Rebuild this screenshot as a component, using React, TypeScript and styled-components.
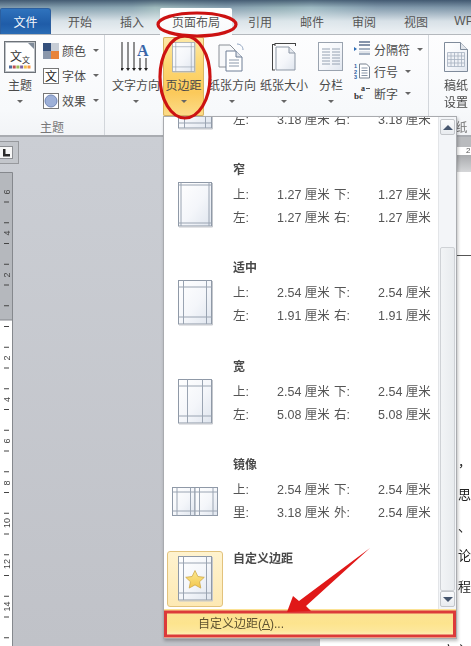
import React from 'react';
import styled, {createGlobalStyle} from 'styled-components';

const GlobalStyle = createGlobalStyle`
  html, body {
    margin: 0;
    padding: 0;
    background: #fff;
  }
  * {
    box-sizing: border-box;
  }
`;

const Window = styled.div`
  position: relative;
  width: 471px;
  height: 646px;
  overflow: hidden;
  display: flex;
  flex-direction: column;
  font-family: 'Liberation Sans', 'Noto Sans CJK SC', sans-serif;
  font-size: 12px;
  color: #4a4a4a;
  filter: blur(0.35px);
`;

/* ---------- tabs ---------- */
const TabBar = styled.div`
  height: 35px;
  flex: none;
  display: flex;
  align-items: flex-end;
  background:
    linear-gradient(180deg, rgba(62, 84, 108, 0.88) 0, rgba(150, 170, 185, 0.6) 22%, rgba(226, 233, 238, 0.92) 62%, #eef2f5 100%),
    linear-gradient(90deg, #5d7f96 0, #7aa0a8 28%, #a9d0c0 33%, #6d8ea2 48%, #8fb8b4 60%, #a8cfd0 66%, #66859c 80%, #58758e 100%);
  border-bottom: 1px solid #b4b8bd;
`;

const FileTab = styled.div`
  width: 51px;
  height: 26px;
  flex: none;
  margin-right: 3px;
  display: flex;
  align-items: center;
  justify-content: center;
  color: #f4f8fc;
  font-size: 12px;
  border-radius: 2px 3px 0 0;
  background: linear-gradient(180deg, #2f73bd, #1f5ca8 60%, #2a6cb5);
  border: 1px solid #2c5f9f;
  border-bottom: none;
`;

const Tab = styled.div<{active?: boolean}>`
  width: ${props => (props.active ? '72px' : '52px')};
  height: 26px;
  flex: none;
  display: flex;
  align-items: center;
  justify-content: center;
  color: #555;
  ${props =>
    props.active &&
    `
    margin: 0 2px;
    height: 27px;
    margin-bottom: -1px;
    background: linear-gradient(180deg, #fff, #f8fafb);
    border-radius: 2px 2px 0 0;
  `}
`;

/* ---------- ribbon ---------- */
const Ribbon = styled.div`
  height: 102px;
  flex: none;
  display: flex;
  background: linear-gradient(180deg, #fdfdfe, #f7f9fb 75%, #f2f4f7);
  border-bottom: 2px solid #a9acb1;
`;

const Group = styled.div<{width: number}>`
  width: ${props => props.width}px;
  flex: none;
  display: flex;
  flex-direction: column;
  border-right: 1px solid #d2d6db;
`;

const GroupBody = styled.div<{inset?: number}>`
  height: 81px;
  margin-top: 2px;
  padding-left: ${props => props.inset || 0}px;
  display: flex;
  gap: 3px;
`;

const GroupLabel = styled.div`
  flex: 1;
  display: flex;
  align-items: center;
  justify-content: center;
  color: #777;
`;

const BigButton = styled.div<{width: number; hot?: boolean}>`
  width: ${props => props.width}px;
  height: 79px;
  flex: none;
  padding-top: 5px;
  display: flex;
  flex-direction: column;
  align-items: center;
  white-space: nowrap;
  border-radius: 2px;
  ${props =>
    props.hot &&
    `
    background: linear-gradient(180deg, #fde9a8 0, #fdd872 35%, #fbc95a 70%, #fcdc8a 100%);
    box-shadow: inset 0 0 0 1px #d8b562;
  `}
`;

const IconSlot = styled.div`
  height: 30px;
  display: flex;
  align-items: center;
  justify-content: center;
`;

const BigLabel = styled.div`
  margin-top: 6px;
  height: 16px;
  line-height: 16px;
`;

const Caret = styled.span`
  display: inline-block;
  width: 0;
  height: 0;
  border-left: 3px solid transparent;
  border-right: 3px solid transparent;
  border-top: 3px solid #666;
`;

const BigCaret = styled(Caret)`
  margin-top: 6px;
`;

const SmallColumn = styled.div<{row: number; width: number}>`
  width: ${props => props.width}px;
  flex: none;
  padding-top: 1px;
  display: grid;
  grid-auto-rows: ${props => props.row}px;
`;

const SmallRow = styled.div`
  display: flex;
  align-items: center;
  gap: 3px;
  white-space: nowrap;
`;

const SmallCaret = styled(Caret)`
  margin-left: 4px;
`;

const PaperLine = styled.div`
  height: 18px;
  line-height: 18px;
`;

/* ---------- work area ---------- */
const Workspace = styled.div`
  flex: 1;
  display: flex;
  min-height: 0;
`;

const Gutter = styled.div`
  width: 320px;
  flex: none;
  padding-top: 4px;
  background: linear-gradient(180deg, #cbced4, #c0c2c8);
`;

const RulerCorner = styled.div`
  width: 19px;
  height: 23px;
  padding: 4px 5px 4px 0;
  border: 1px solid #97999d;
  border-left: none;
  background: #c3c6cb;
`;

const CornerBox = styled.div`
  width: 13px;
  height: 13px;
  display: flex;
  align-items: center;
  justify-content: center;
  background: #f7f7f7;
  border: 1px solid #8d8f93;
  border-left: none;
`;

const VerticalRuler = styled.div`
  margin-top: 8px;
  width: 13px;
  height: 474px;
`;

const Page = styled.div`
  flex: 1;
  min-width: 0;
  display: flex;
  flex-direction: column;
  background: #fff;
`;

const PageRulerTop = styled.div`
  height: 10px;
  flex: none;
  background: #b9bbbe;
`;

const PageRuler = styled.div`
  height: 8px;
  flex: none;
  padding-left: 146px;
  background: #fff;
  color: #555;
  font-size: 8px;
  line-height: 8px;
`;

const PageRulerBottom = styled.div`
  height: 17px;
  flex: none;
  background: linear-gradient(180deg, #a9abae, #d5d6d8);
`;

const PageText = styled.div`
  padding-left: 138px;
  color: #222;
  font-size: 13px;
`;

const TableRule = styled.div`
  margin-top: 83px;
  flex: none;
  border-top: 1px solid #555;
`;

const TextLine = styled.div<{gap: number}>`
  margin-top: ${props => props.gap}px;
  height: 20px;
  line-height: 20px;
  white-space: nowrap;
`;

const LastLine = styled(TextLine)`
  margin-left: -16px;
`;

/* ---------- margins dropdown ---------- */
const Dropdown = styled.div`
  position: absolute;
  left: 163px;
  top: 116px;
  width: 294px;
  height: 523px;
  display: flex;
  flex-direction: column;
  background: #fff;
  border: 1px solid #a9abaf;
  box-shadow: 1px 2px 3px rgba(0, 0, 0, 0.25);
`;

const GalleryArea = styled.div`
  height: 492px;
  flex: none;
  display: flex;
`;

const Gallery = styled.div`
  flex: 1;
  min-width: 0;
  display: flex;
  flex-direction: column;
  justify-content: flex-end;
  overflow: hidden;
`;

const MarginItem = styled.div<{custom?: boolean}>`
  height: ${props => (props.custom ? '58px' : '98.25px')};
  flex: none;
  padding-top: ${props => (props.custom ? '0' : '4px')};
  display: flex;
`;

const Thumb = styled.div<{custom?: boolean}>`
  width: 61px;
  flex: none;
  margin-right: 8px;
  display: flex;
  justify-content: center;
  padding-top: 20px;
  ${props =>
    props.custom &&
    `
    width: 56px;
    height: 56px;
    margin: 0 10px 0 3px;
    padding-top: 4px;
    background: linear-gradient(180deg, #fff3cf, #fde9b4);
    border: 1px solid #e2c27c;
    border-radius: 3px;
  `}
`;

const MirrorThumb = styled(Thumb)`
  padding-top: 30px;
`;

const Details = styled.div`
  flex: 1;
`;

const ItemTitle = styled.div`
  height: 16px;
  line-height: 16px;
  font-weight: bold;
  color: #4a4a4a;
`;

const ValueGrid = styled.div`
  margin-top: 4px;
  display: grid;
  grid-template-columns: 44px 57px 44px auto;
  grid-auto-rows: 23px;
  align-items: center;
  white-space: nowrap;
  color: #555;
  font-size: 12.5px;
`;

const ScrollBar = styled.div`
  width: 18px;
  flex: none;
  display: flex;
  flex-direction: column;
  align-items: center;
  padding-top: 2px;
  background: #f3f5f8;
  border-left: 1px solid #e3e5e8;
`;

const ScrollButton = styled.div`
  width: 15px;
  height: 16px;
  flex: none;
  display: flex;
  align-items: center;
  justify-content: center;
  background: linear-gradient(180deg, #fbfcfd, #e8ebef);
  border: 1px solid #c3c6ca;
  border-radius: 2px;
`;

const ScrollTrack = styled.div`
  height: 112px;
  flex: none;
`;

const ScrollThumb = styled.div`
  width: 15px;
  height: 344px;
  flex: none;
  background: linear-gradient(90deg, #f2f4f6, #e8ebee);
  border: 1px solid #cfd2d6;
  border-radius: 2px;
`;

const ArrowUp = styled.span`
  width: 0;
  height: 0;
  border-left: 5px solid transparent;
  border-right: 5px solid transparent;
  border-bottom: 5px solid #46566e;
`;

const ArrowDown = styled.span`
  width: 0;
  height: 0;
  border-left: 5px solid transparent;
  border-right: 5px solid transparent;
  border-top: 5px solid #46566e;
`;

const Footer = styled.div`
  flex: 1;
  display: flex;
  align-items: center;
  padding: 0 0 3px 34px;
  color: #5f5230;
  background: linear-gradient(180deg, #fbe295 0, #fde48e 50%, #fde79c 75%, #fff5cb 100%);
`;

const Annotations = styled.svg`
  position: absolute;
  left: 0;
  top: 0;
  pointer-events: none;
`;

/* ---------- drawings ---------- */
const PageDefs = () => (
  <svg width="0" height="0" style={{position: 'absolute'}}>
    <defs>
      <linearGradient id="sheet" x1="0" y1="0" x2="1" y2="1">
        <stop offset="0" stopColor="#ffffff" />
        <stop offset="0.55" stopColor="#f4f6fa" />
        <stop offset="1" stopColor="#dfe5ee" />
      </linearGradient>
      <linearGradient id="star" x1="0" y1="0" x2="0" y2="1">
        <stop offset="0" stopColor="#fbe98f" />
        <stop offset="1" stopColor="#f3c64e" />
      </linearGradient>
    </defs>
  </svg>
);

const MarginSheet = ({
  inset,
  star,
  width = 36,
  height = 46,
}: {
  inset: [number, number];
  star?: boolean;
  width?: number;
  height?: number;
}) => (
  <svg width={width} height={height} viewBox="0 0 36 46" style={{display: 'block', flex: 'none'}}>
    <rect x="1.5" y="0.5" width="33" height="43.5" fill="url(#sheet)" stroke="#8f99a7" />
    <path
      d={`M1.5 ${inset[0]}H34.5M1.5 ${44 - inset[0]}H34.5M${inset[1] + 1.5} .5V44M${34.5 - inset[1]} .5V44`}
      stroke="#9aa4b2"
      fill="none"
    />
    <path d="M2 45H35.5V1" stroke="#c5c8cd" fill="none" />
    {star && (
      <path
        d="M18 14.5l2.9 6 6.4.8-4.7 4.4 1.2 6.4-5.8-3.2-5.8 3.2 1.2-6.4-4.7-4.4 6.4-.8z"
        fill="url(#star)"
        stroke="#c9a13c"
        strokeWidth=".7"
      />
    )}
  </svg>
);

const MirrorSheet = () => (
  <svg width="46" height="30" viewBox="0 0 46 30" style={{display: 'block', flex: 'none'}}>
    <rect x=".5" y=".5" width="22.5" height="28" fill="url(#sheet)" stroke="#8f99a7" />
    <rect x="23" y=".5" width="22.5" height="28" fill="url(#sheet)" stroke="#8f99a7" />
    <path d="M.5 5H45.5M.5 24H45.5M5 .5V28.5M41 .5V28.5M18.5 .5V28.5M27.5 .5V28.5" stroke="#9aa4b2" fill="none" />
  </svg>
);

const ThemeIcon = () => (
  <svg width="32" height="32" viewBox="0 0 32 32">
    <rect x=".5" y=".5" width="31" height="31" fill="#fff" stroke="#6d7278" />
    <rect x="1.5" y="1.5" width="29" height="29" fill="none" stroke="#bfc3c8" />
    <path d="M24 2h6v6z" fill="#7f8a99" />
    <text x="6" y="20" fontSize="12" fill="#333" fontFamily="Noto Sans CJK SC">文</text>
    <text x="18" y="22" fontSize="8" fill="#333" fontFamily="Noto Sans CJK SC">文</text>
    {['#4f6d9b', '#c0504d', '#9bbb59', '#8064a2', '#f2c14e', '#f79646'].map((c, i) => (
      <rect key={c} x={5 + i * 3.7} y="24.5" width="3" height="3" fill={c} />
    ))}
  </svg>
);

const ColorIcon = () => (
  <svg width="16" height="16" viewBox="0 0 16 16">
    <rect x="0" y="0" width="8" height="8" fill="#34507c" />
    <rect x="8" y="0" width="8" height="8" fill="#c7cdd6" />
    <rect x="0" y="8" width="8" height="8" fill="#8a97ab" />
    <rect x="8" y="8" width="8" height="8" fill="#e8843a" />
  </svg>
);

const FontIcon = () => (
  <svg width="16" height="16" viewBox="0 0 16 16">
    <rect x=".5" y=".5" width="15" height="15" fill="#fff" stroke="#777" />
    <text x="2" y="13" fontSize="12" fill="#222" fontFamily="Noto Sans CJK SC">文</text>
  </svg>
);

const EffectIcon = () => (
  <svg width="16" height="16" viewBox="0 0 16 16">
    <rect x=".5" y=".5" width="15" height="15" fill="#fff" stroke="#777" />
    <circle cx="8" cy="8" r="6" fill="#9db0d8" stroke="#7186b5" />
  </svg>
);

const TextDirectionIcon = () => (
  <svg width="30" height="30" viewBox="0 0 30 30">
    {[1, 7, 13, 19, 25].map((x, i) => (
      <g key={x} stroke="#222" fill="#222">
        <path d={`M${x} ${i < 3 ? 0 : 16}V27`} fill="none" />
        <path d={`M${x - 2} 26h4l-2 3z`} stroke="none" />
      </g>
    ))}
    <text x="16" y="14" fontSize="16" fontWeight="bold" fill="#3a66a8" fontFamily="Liberation Serif">A</text>
  </svg>
);

const PaperOrientationIcon = () => (
  <svg width="28" height="30" viewBox="0 0 28 30">
    <path d="M1 3h11l5 5v17H1z" fill="#f7f8fa" stroke="#8a8f96" />
    <path d="M8 9h10l6 6v14H8z" fill="#fff" stroke="#6f7f96" />
    <path d="M18 9v6h6" fill="#dfe3ea" stroke="#6f7f96" />
    <path d="M11 18h10M11 21h10M11 24h10" stroke="#8b98aa" />
    <path d="M19 2c3 0 6 2 6 6" stroke="#8fa3c0" fill="none" />
  </svg>
);

const PaperSizeIcon = () => (
  <svg width="24" height="28" viewBox="0 0 24 28">
    <path d="M.5 1.5V27M0 1.5h3M0 27h3M3 .5H23.5M3 0v3M23.5 0v3" stroke="#444" fill="none" />
    <path d="M4 4h13l6 6v17H4z" fill="url(#sheet)" stroke="#8d97a5" />
    <path d="M17 4v6h6" fill="#e4e8ee" stroke="#8d97a5" />
  </svg>
);

const ColumnsIcon = () => (
  <svg width="26" height="30" viewBox="0 0 26 30">
    <rect x=".5" y=".5" width="24" height="28" fill="url(#sheet)" stroke="#9aa3af" />
    <path
      d="M4 7h8M14 7h8M4 10h8M14 10h8M4 13h8M14 13h8M4 16h8M14 16h8M4 19h8M14 19h8M4 22h8M14 22h8"
      stroke="#96a2b2"
    />
  </svg>
);

const BreaksIcon = () => (
  <svg width="17" height="16" viewBox="0 0 17 16">
    <path d="M5 1h11M5 4h11" stroke="#5f7290" strokeWidth="1.4" />
    <path d="M0 6l3 2-3 2z" fill="#2d6cb5" />
    <path d="M5 8h11M5 13h11" stroke="#8898ae" strokeWidth="1.4" />
    <path d="M5 11h11" stroke="#c3cbd6" />
  </svg>
);

const LineNumberIcon = () => (
  <svg width="17" height="16" viewBox="0 0 17 16">
    <text x="0" y="5" fontSize="5.5" fontWeight="bold" fill="#2d5fa0" fontFamily="Liberation Sans">1</text>
    <text x="0" y="10.5" fontSize="5.5" fontWeight="bold" fill="#2d5fa0" fontFamily="Liberation Sans">2</text>
    <text x="0" y="16" fontSize="5.5" fontWeight="bold" fill="#2d5fa0" fontFamily="Liberation Sans">3</text>
    <path d="M5.5 1h7l3 3v11h-10z" fill="#fff" stroke="#77818f" />
    <path d="M7.5 5h6M7.5 7.5h6M7.5 10h6M7.5 12.5h6" stroke="#8794a6" />
  </svg>
);

const HyphenIcon = () => (
  <svg width="17" height="16" viewBox="0 0 17 16">
    <text x="7" y="6" fontSize="8" fontWeight="bold" fill="#333" fontFamily="Liberation Serif">a</text>
    <text x="0" y="14" fontSize="9" fontWeight="bold" fill="#333" fontFamily="Liberation Serif">bc</text>
    <path d="M12 3.5h4" stroke="#555" />
  </svg>
);

const DraftPaperIcon = () => (
  <svg width="24" height="30" viewBox="0 0 24 30">
    <path d="M.5.5h16l7 7v22H.5z" fill="url(#sheet)" stroke="#7f8b9b" />
    <path d="M16.5.5v7h7" fill="#e2e6ec" stroke="#7f8b9b" />
    <path
      d="M3.5 10.5h17v14h-17zM3.5 14h17M3.5 17.5h17M3.5 21h17M7 10.5v14M10.5 10.5v14M14 10.5v14M17.5 10.5v14"
      fill="#eef1f6"
      stroke="#a6b1c0"
      strokeWidth=".8"
    />
  </svg>
);

const CornerMark = () => (
  <svg width="9" height="9" viewBox="0 0 9 9">
    <path d="M1 1h2.5v5H8v2.5H1z" fill="#2b2b2b" />
  </svg>
);

const RULER_TICKS = Array.from({length: 22}, (_, i) => 30 + i * 20.75);
const RULER_NUMBERS: [string, number][] = [
  ['6', 20],
  ['4', 61],
  ['2', 103],
  ['2', 186],
  ['4', 227.5],
  ['6', 269],
  ['8', 311],
  ['10', 351],
  ['12', 392],
  ['14', 434.5],
];

const RulerDrawing = () => (
  <svg width="13" height="474" viewBox="0 0 13 474" style={{display: 'block'}}>
    <rect x="0" y="0" width="12.5" height="148" fill="#b5b8bd" />
    <rect x="0" y="148" width="12.5" height="326" fill="#fff" />
    <path d="M0 .5H12.5V474M0 148H12.5" stroke="#85888d" fill="none" />
    {RULER_TICKS.map(y => (
      <path key={y} d={`M4 ${y}H9`} stroke="#444" />
    ))}
    {RULER_NUMBERS.map(([n, y]) => (
      <text
        key={y}
        transform={`translate(9.5 ${y}) rotate(-90)`}
        fontSize="9"
        textAnchor="middle"
        fill="#444"
        fontFamily="Liberation Sans">
        {n}
      </text>
    ))}
  </svg>
);

type Margins = {
  name: string;
  sides: [string, string, string, string];
  values: [string, string, string, string];
  inset: [number, number];
  mirror?: boolean;
};

const PRESETS: Margins[] = [
  {
    name: '普通',
    sides: ['上:', '下:', '左:', '右:'],
    values: ['2.54 厘米', '2.54 厘米', '3.18 厘米', '3.18 厘米'],
    inset: [5, 6],
  },
  {
    name: '窄',
    sides: ['上:', '下:', '左:', '右:'],
    values: ['1.27 厘米', '1.27 厘米', '1.27 厘米', '1.27 厘米'],
    inset: [3, 2.5],
  },
  {
    name: '适中',
    sides: ['上:', '下:', '左:', '右:'],
    values: ['2.54 厘米', '2.54 厘米', '1.91 厘米', '1.91 厘米'],
    inset: [7, 5],
  },
  {
    name: '宽',
    sides: ['上:', '下:', '左:', '右:'],
    values: ['2.54 厘米', '2.54 厘米', '5.08 厘米', '5.08 厘米'],
    inset: [7, 9],
  },
  {
    name: '镜像',
    sides: ['上:', '下:', '里:', '外:'],
    values: ['2.54 厘米', '2.54 厘米', '3.18 厘米', '2.54 厘米'],
    inset: [5, 5],
    mirror: true,
  },
];

export default function App() {
  return (
    <Window>
      <GlobalStyle />
      <PageDefs />
      <TabBar>
        <FileTab>文件</FileTab>
        <Tab>开始</Tab>
        <Tab>插入</Tab>
        <Tab active>页面布局</Tab>
        <Tab>引用</Tab>
        <Tab>邮件</Tab>
        <Tab>审阅</Tab>
        <Tab>视图</Tab>
        <Tab>WPS</Tab>
      </TabBar>

      <Ribbon>
        <Group width={105}>
          <GroupBody>
            <BigButton width={40}>
              <IconSlot>
                <ThemeIcon />
              </IconSlot>
              <BigLabel>主题</BigLabel>
              <BigCaret />
            </BigButton>
            <SmallColumn row={25} width={60}>
              <SmallRow>
                <ColorIcon />
                颜色
                <SmallCaret />
              </SmallRow>
              <SmallRow>
                <FontIcon />
                字体
                <SmallCaret />
              </SmallRow>
              <SmallRow>
                <EffectIcon />
                效果
                <SmallCaret />
              </SmallRow>
            </SmallColumn>
          </GroupBody>
          <GroupLabel>主题</GroupLabel>
        </Group>

        <Group width={324}>
          <GroupBody inset={7}>
            <BigButton width={48}>
              <IconSlot>
                <TextDirectionIcon />
              </IconSlot>
              <BigLabel>文字方向</BigLabel>
              <BigCaret />
            </BigButton>
            <BigButton width={41} hot>
              <IconSlot>
                <MarginSheet inset={[7, 5]} width={25} height={31} />
              </IconSlot>
              <BigLabel>页边距</BigLabel>
              <BigCaret />
            </BigButton>
            <BigButton width={50}>
              <IconSlot>
                <PaperOrientationIcon />
              </IconSlot>
              <BigLabel>纸张方向</BigLabel>
              <BigCaret />
            </BigButton>
            <BigButton width={48}>
              <IconSlot>
                <PaperSizeIcon />
              </IconSlot>
              <BigLabel>纸张大小</BigLabel>
              <BigCaret />
            </BigButton>
            <BigButton width={40}>
              <IconSlot>
                <ColumnsIcon />
              </IconSlot>
              <BigLabel>分栏</BigLabel>
              <BigCaret />
            </BigButton>
            <SmallColumn row={22} width={72}>
              <SmallRow>
                <BreaksIcon />
                分隔符
                <SmallCaret />
              </SmallRow>
              <SmallRow>
                <LineNumberIcon />
                行号
                <SmallCaret />
              </SmallRow>
              <SmallRow>
                <HyphenIcon />
                断字
                <SmallCaret />
              </SmallRow>
            </SmallColumn>
          </GroupBody>
          <GroupLabel />
        </Group>

        <Group width={54}>
          <GroupBody inset={9}>
            <BigButton width={36}>
              <IconSlot>
                <DraftPaperIcon />
              </IconSlot>
              <BigLabel>稿纸</BigLabel>
              <PaperLine>设置</PaperLine>
            </BigButton>
          </GroupBody>
          <GroupLabel>稿纸</GroupLabel>
        </Group>
      </Ribbon>

      <Workspace>
        <Gutter>
          <RulerCorner>
            <CornerBox>
              <CornerMark />
            </CornerBox>
          </RulerCorner>
          <VerticalRuler>
            <RulerDrawing />
          </VerticalRuler>
        </Gutter>
        <Page>
          <PageRulerTop />
          <PageRuler>2</PageRuler>
          <PageRulerBottom />
          <TableRule />
          <PageText>
            <TextLine gap={196}>，</TextLine>
            <TextLine gap={13}>思</TextLine>
            <TextLine gap={12}>、</TextLine>
            <TextLine gap={9}>论</TextLine>
            <TextLine gap={11}>程</TextLine>
            <LastLine gap={44}>文主</LastLine>
          </PageText>
        </Page>
      </Workspace>

      <Dropdown>
        <GalleryArea>
          <Gallery>
            {PRESETS.map(item => {
              return (
                <MarginItem key={item.name}>
                  {item.mirror ? (
                    <MirrorThumb>
                      <MirrorSheet />
                    </MirrorThumb>
                  ) : (
                    <Thumb>
                      <MarginSheet inset={item.inset} />
                    </Thumb>
                  )}
                  <Details>
                    <ItemTitle>{item.name}</ItemTitle>
                    <ValueGrid>
                      <span>{item.sides[0]}</span>
                      <span>{item.values[0]}</span>
                      <span>{item.sides[1]}</span>
                      <span>{item.values[1]}</span>
                      <span>{item.sides[2]}</span>
                      <span>{item.values[2]}</span>
                      <span>{item.sides[3]}</span>
                      <span>{item.values[3]}</span>
                    </ValueGrid>
                  </Details>
                </MarginItem>
              );
            })}
            <MarginItem custom>
              <Thumb custom>
                <MarginSheet inset={[7, 5]} star />
              </Thumb>
              <Details>
                <ItemTitle>自定义边距</ItemTitle>
              </Details>
            </MarginItem>
          </Gallery>
          <ScrollBar>
            <ScrollButton>
              <ArrowUp />
            </ScrollButton>
            <ScrollTrack />
            <ScrollThumb />
            <ScrollButton>
              <ArrowDown />
            </ScrollButton>
          </ScrollBar>
        </GalleryArea>
        <Footer>
          <span>
            自定义边距(<u>A</u>)...
          </span>
        </Footer>
      </Dropdown>

      <Annotations width="471" height="646" viewBox="0 0 471 646">
        <ellipse cx="197" cy="24.5" rx="39" ry="11.5" fill="none" stroke="#cc1212" strokeWidth="3.2" />
        <ellipse cx="185" cy="77" rx="25" ry="41" fill="none" stroke="#cc1212" strokeWidth="3.2" />
        <rect x="165.5" y="612" width="289" height="24" fill="none" stroke="#dc3a3a" strokeWidth="3" />
        <polygon points="370,548 299,601 293,596 287,612 311,611 306,606" fill="#e01818" />
      </Annotations>
    </Window>
  );
}
